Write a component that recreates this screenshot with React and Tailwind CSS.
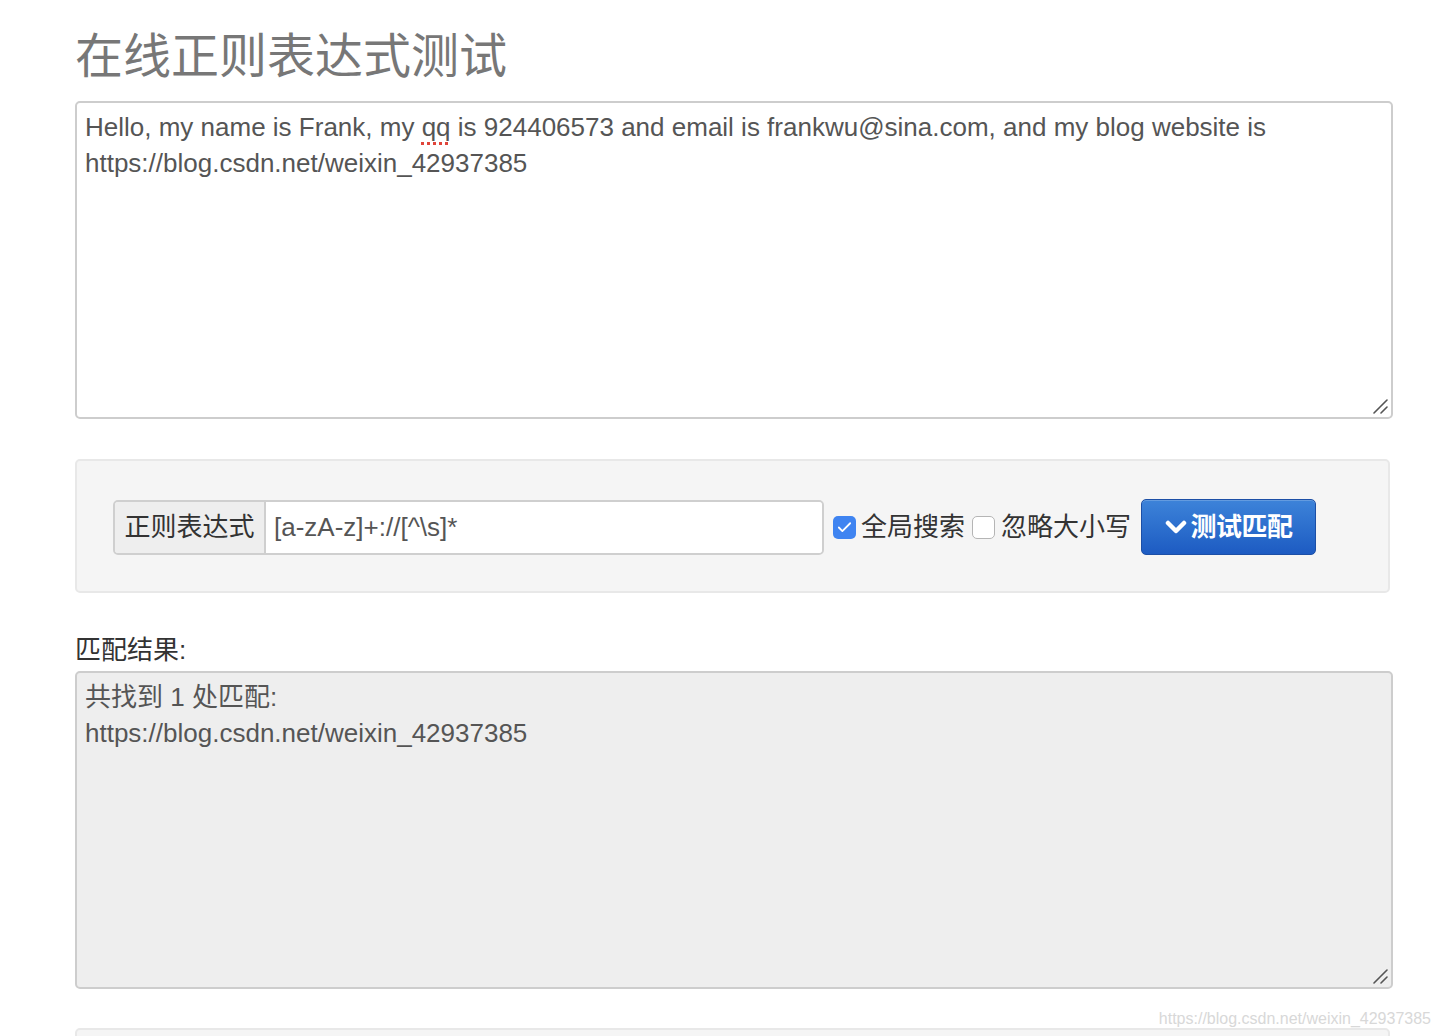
import { Check } from 'lucide-react'

const FONT = { fontFamily: '"Liberation Sans", "Noto Sans CJK SC", sans-serif' }

function Grip() {
  return (
    <svg className="absolute right-[3px] bottom-[3px]" width="16" height="16" viewBox="0 0 16 16">
      <path d="M2 15 L15 2 M9 15 L15 9" stroke="#555" strokeWidth="1.6" strokeLinecap="round" />
    </svg>
  )
}

function Box({ children, gray }) {
  return (
    <div
      className={`relative w-[1318px] h-[318px] border-2 border-[#cdcdcd] rounded-[5px] px-[8px] py-[6px] text-[26px] leading-[36px] text-[#555] ${gray ? 'bg-[#eeeeee]' : 'bg-white'}`}
    >
      {children}
      <Grip />
    </div>
  )
}

export default function App() {
  return (
    <div className="relative min-h-[1036px] bg-white overflow-hidden" style={FONT}>
      <div className="pl-[75px] pt-[30px]">
        <h1 className="text-[48px] leading-[53px] text-[#777] mb-[18px]">在线正则表达式测试</h1>

        <Box>
          Hello, my name is Frank, my{' '}
          <span className="underline decoration-dotted decoration-[#e0443a] decoration-[3px] underline-offset-[6px]">qq</span>{' '}
          is 924406573 and email is frankwu@sina.com, and my blog website is https://blog.csdn.net/weixin_42937385
        </Box>

        {/* regex form */}
        <div className="mt-[40px] w-[1315px] h-[134px] bg-[#f5f5f5] border-2 border-[#e8e8e8] rounded-[5px] pl-[36px] pt-[38px]">
          <div className="flex items-center">
            <div className="flex h-[55px] w-[711px] border-2 border-[#cfcfcf] rounded-[5px] overflow-hidden">
              <div className="w-[151px] shrink-0 bg-[#eeeeee] border-r-2 border-[#cfcfcf] flex items-center justify-center text-[26px] text-[#333]">
                正则表达式
              </div>
              <div className="flex-1 bg-white flex items-center pl-[8px] text-[26px] text-[#555]">
                [a-zA-z]+://[^\s]*
              </div>
            </div>

            <span className="ml-[9px] w-[23px] h-[23px] rounded-[5px] bg-[#3f84f1] flex items-center justify-center">
              <Check size={17} strokeWidth={2.5} color="white" />
            </span>
            <span className="ml-[5px] text-[26px] text-[#333]">全局搜索</span>
            <span className="ml-[7px] w-[23px] h-[23px] rounded-[5px] bg-white border border-[#b5b5b5]" />
            <span className="ml-[6px] text-[26px] text-[#333]">忽略大小写</span>

            <button className="ml-[10px] w-[175px] h-[56px] rounded-[5px] border border-[#1c4fa6] bg-gradient-to-b from-[#3d83d9] to-[#1d5bc2] text-white flex items-center justify-center gap-[4px] shadow-[inset_0_1px_0_rgba(255,255,255,0.2)]">
              <svg width="22" height="16" viewBox="0 0 22 16">
                <path d="M3 4 L11 12 L19 4" stroke="white" strokeWidth="4.5" fill="none" strokeLinecap="round" strokeLinejoin="round" />
              </svg>
              <span className="text-[26px] font-bold tracking-[-0.5px]">测试匹配</span>
            </button>
          </div>
        </div>

        <div className="mt-[39px] mb-[3px] text-[26px] leading-[36px] text-[#333]">匹配结果:</div>

        <Box gray>
          <div>共找到 1 处匹配:</div>
          <div>https://blog.csdn.net/weixin_42937385</div>
        </Box>

        <div className="mt-[39px] w-[1315px] h-[40px] bg-[#f5f5f5] border-2 border-[#e8e8e8] rounded-[5px]" />
      </div>

      <div className="absolute right-[9px] top-[1007px] text-[16px] text-[#d8d8d8]">
        https://blog.csdn.net/weixin_42937385
      </div>
    </div>
  )
}
